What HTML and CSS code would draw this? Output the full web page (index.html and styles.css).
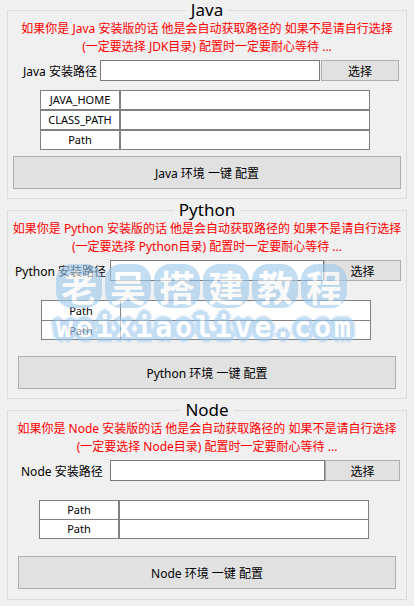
FILE: index.html
```html
<!DOCTYPE html>
<html lang="zh-CN">
<head>
<meta charset="utf-8">
<title>环境配置</title>
<link rel="stylesheet" href="styles.css">
</head>
<body>
<main class="app">
  <fieldset class="group g-java">
    <legend>Java</legend>
    <p class="hint">如果你是 Java 安装版的话 他是会自动获取路径的 如果不是请自行选择<br>(一定要选择 JDK目录) 配置时一定要耐心等待 ...</p>
    <div class="path-row">
      <label class="path-label">Java 安装路径</label>
      <input class="path-input" type="text">
      <button class="pick">选择</button>
    </div>
    <div class="vars">
      <div class="k">JAVA_HOME</div><div class="v"></div>
      <div class="k">CLASS_PATH</div><div class="v"></div>
      <div class="k">Path</div><div class="v"></div>
    </div>
    <button class="setup">Java 环境 一键 配置</button>
  </fieldset>

  <fieldset class="group g-python">
    <legend>Python</legend>
    <p class="hint">如果你是 Python 安装版的话 他是会自动获取路径的 如果不是请自行选择<br>(一定要选择 Python目录) 配置时一定要耐心等待 ...</p>
    <div class="path-row">
      <label class="path-label">Python 安装路径</label>
      <input class="path-input" type="text">
      <button class="pick">选择</button>
    </div>
    <div class="vars">
      <div class="k">Path</div><div class="v"></div>
      <div class="k">Path</div><div class="v"></div>
    </div>
    <button class="setup">Python 环境 一键 配置</button>
  </fieldset>

  <fieldset class="group g-node">
    <legend>Node</legend>
    <p class="hint">如果你是 Node 安装版的话 他是会自动获取路径的 如果不是请自行选择<br>(一定要选择 Node目录) 配置时一定要耐心等待 ...</p>
    <div class="path-row">
      <label class="path-label">Node 安装路径</label>
      <input class="path-input" type="text">
      <button class="pick">选择</button>
    </div>
    <div class="vars">
      <div class="k">Path</div><div class="v"></div>
      <div class="k">Path</div><div class="v"></div>
    </div>
    <button class="setup">Node 环境 一键 配置</button>
  </fieldset>
</main>

<div class="watermark" aria-hidden="true">
  <div class="wm-cn"><span>老</span><span>吴</span><span>搭</span><span>建</span><span>教</span><span>程</span></div>
  <div class="wm-en">weixiaolive.com</div>
</div>
</body>
</html>
```

FILE: styles.css
```css
html, body {
  margin: 0;
  padding: 0;
  background: #f0f0f0;
}

body {
  position: relative;
  width: 414px;
  height: 606px;
  overflow: hidden;
  font-family: "Noto Sans", "Noto Sans CJK SC", sans-serif;
  font-size: 12px;
  color: #000;
}

.app {
  display: flex;
  flex-direction: column;
  gap: 1px;
}

.group {
  margin: 0 7px;
  padding: 0 0 9px 0;
  border: 1px solid #dcdcdc;
  min-width: 0;
}

.g-node { padding-bottom: 10px; }

.group legend {
  margin: 0 auto;
  padding: 0 5px;
  font-size: 17px;
  line-height: 20px;
}

.hint {
  margin: 0;
  font-size: 12px;
  line-height: 18px;
  color: #ff0000;
  text-align: center;
  white-space: nowrap;
}

.path-row {
  display: flex;
  align-items: center;
  margin-top: 4px;
  height: 21px;
}

.path-label {
  flex: none;
  font-size: 12px;
  white-space: nowrap;
}

.path-input {
  flex: none;
  box-sizing: border-box;
  height: 21px;
  margin: 0;
  padding: 0 2px;
  border: 1px solid #7a7a7a;
  background: #fff;
  outline: none;
}

.pick {
  flex: none;
  box-sizing: border-box;
  height: 21px;
  margin: 0;
  padding: 0;
  border: 1px solid #adadad;
  background: #e1e1e1;
  font-family: inherit;
  font-size: 12px;
  color: #000;
}

.g-java .path-row { padding-left: 15px; }
.g-java .path-label { width: 77px; }
.g-java .path-input { width: 220px; }
.g-java .pick { width: 78px; margin-left: 1px; }

.g-python .path-row { padding-left: 7px; }
.g-python .path-label { width: 95px; }
.g-python .path-input { width: 214px; }
.g-python .pick { width: 77px; }

.g-node .path-row { padding-left: 13px; }
.g-node .path-label { width: 89px; }
.g-node .path-input { width: 215px; }
.g-node .pick { width: 75px; }

.vars {
  display: grid;
  background: #808080;
  border: 1px solid #808080;
  width: 328px;
}

.vars .k,
.vars .v {
  background: #fff;
}

.vars .k {
  font-size: 11px;
  text-align: center;
  white-space: nowrap;
  overflow: hidden;
}

.g-java .vars {
  margin: 9px 0 0 32px;
  grid-template-columns: 78px 1fr;
  grid-auto-rows: 18px;
  gap: 2px;
}
.g-java .vars .k { line-height: 18px; }

.g-python .vars {
  margin: 19px 0 0 33px;
  grid-template-columns: 78px 1fr;
  grid-template-rows: 19px 18px;
  gap: 1px;
}
.g-python .vars .k { line-height: 19px; }

.g-node .vars {
  margin: 19px 0 0 31px;
  grid-template-columns: 78px 1fr;
  grid-auto-rows: 18px;
  row-gap: 1px;
  column-gap: 2px;
}
.g-node .vars .k { line-height: 18px; }

.setup {
  display: block;
  box-sizing: border-box;
  height: 33px;
  padding: 0;
  border: 1px solid #adadad;
  background: #e1e1e1;
  font-family: inherit;
  font-size: 12px;
  color: #000;
}

.g-java .setup { margin: 6px 0 0 5px; width: 388px; }
.g-python .setup { margin: 16px 0 0 10px; width: 378px; }
.g-node .setup { margin: 17px 0 0 10px; width: 378px; }

/* watermark overlay */
.watermark {
  position: absolute;
  left: 56px;
  top: 264px;
  opacity: 0.6;
  pointer-events: none;
}

.wm-cn {
  display: flex;
  gap: 3px;
}

.wm-cn span {
  display: flex;
  align-items: center;
  justify-content: center;
  width: 46px;
  height: 44px;
  border-radius: 16px;
  background: #9cc7ec;
  color: #fff;
  font-family: "Noto Sans CJK SC", sans-serif;
  font-weight: 700;
  font-size: 36px;
  line-height: 1;
}

.wm-en {
  margin-top: 4px;
  font-family: "DejaVu Sans Mono", monospace;
  font-weight: 700;
  font-size: 28px;
  line-height: 32px;
  letter-spacing: 3px;
  color: #fff;
  text-shadow:
    3px 0 1px #9cc7ec, -3px 0 1px #9cc7ec,
    0 3px 1px #9cc7ec, 0 -3px 1px #9cc7ec,
    3px 3px 1px #9cc7ec, -3px -3px 1px #9cc7ec,
    3px -3px 1px #9cc7ec, -3px 3px 1px #9cc7ec,
    5px 0 2px #9cc7ec, -5px 0 2px #9cc7ec,
    0 5px 2px #9cc7ec, 0 -5px 2px #9cc7ec;
}
```
